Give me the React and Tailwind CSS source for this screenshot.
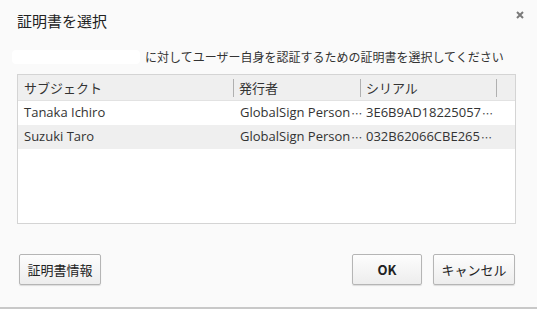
const rows = [
  { subject: 'Tanaka Ichiro', issuer: 'GlobalSign Person', serial: '3E6B9AD18225057' },
  { subject: 'Suzuki Taro', issuer: 'GlobalSign Person', serial: '032B62066CBE265' },
];

function Button({ children, className = '' }) {
  return (
    <button
      className={`h-[31px] rounded-[2px] border border-[#b5b5b5] bg-gradient-to-b from-[#fdfdfd] to-[#ededed] text-[13px] text-[#222] shadow-[0_1px_1px_rgba(0,0,0,0.12)] ${className}`}
    >
      {children}
    </button>
  );
}

const jp = { fontFamily: '"Noto Sans CJK JP", sans-serif' };

function Dots() {
  return (
    <span className="inline-block text-[11px] leading-none ml-[1px] text-[#444]" style={jp}>
      ⋯
    </span>
  );
}

export default function App() {
  return (
    <div
      className="w-[537px] h-[309px] bg-[#fafafa] border-b-2 border-[#c8c8c8] flex flex-col text-[#333]"
      style={{ fontFamily: '"Open Sans", "Noto Sans CJK JP", sans-serif' }}
    >
      <div className="flex items-start justify-between h-[40px] pl-[17px] pr-[12px] pt-[9px]">
        <h1 className="text-[15px] leading-[24px] text-[#222]" style={jp}>
          証明書を選択
        </h1>
        <svg width="8" height="8" viewBox="0 0 8 8" className="mt-[2px] mr-[1px]">
          <path d="M1 1 L7 7 M7 1 L1 7" stroke="#7a7a7a" strokeWidth="2" />
        </svg>
      </div>

      <div className="flex items-center h-[34px] pl-[12px] text-[12px]" style={jp}>
        <span className="w-[128px] h-[14px] bg-white rounded-sm mr-[5px]" />
        <span>に対してユーザー自身を認証するための証明書を選択してください</span>
      </div>

      <div className="ml-[17px] mr-[21px] h-[150px] border border-[#d4d4d4] bg-white flex flex-col text-[13px]">
        <div className="flex h-[26px] bg-[#efefef] border-b border-[#e2e2e2] items-center" style={jp}>
          <div className="w-[216px] pl-[6px] border-r border-[#b0b0b0] h-[18px] leading-[18px]">サブジェクト</div>
          <div className="w-[127px] pl-[5px] border-r border-[#b0b0b0] h-[18px] leading-[18px]">発行者</div>
          <div className="w-[136px] pl-[5px] border-r border-[#b0b0b0] h-[18px] leading-[18px]">シリアル</div>
        </div>
        {rows.map((r, i) => (
          <div key={r.subject} className={`flex h-[24px] items-center ${i % 2 ? 'bg-[#efefef]' : 'bg-white'}`}>
            <div className="w-[216px] pl-[6px] whitespace-nowrap">{r.subject}</div>
            <div className="w-[127px] pl-[6px] whitespace-nowrap flex items-center">
              {r.issuer}
              <Dots />
            </div>
            <div className="w-[136px] pl-[5px] whitespace-nowrap flex items-center">
              {r.serial}
              <Dots />
            </div>
          </div>
        ))}
      </div>

      <div className="flex items-center justify-between mt-[30px] pl-[19px] pr-[22px]" style={jp}>
        <Button className="w-[82px]">証明書情報</Button>
        <div className="flex gap-[11px]">
          <Button className="w-[70px] font-bold">OK</Button>
          <Button className="w-[82px]">キャンセル</Button>
        </div>
      </div>
    </div>
  );
}
